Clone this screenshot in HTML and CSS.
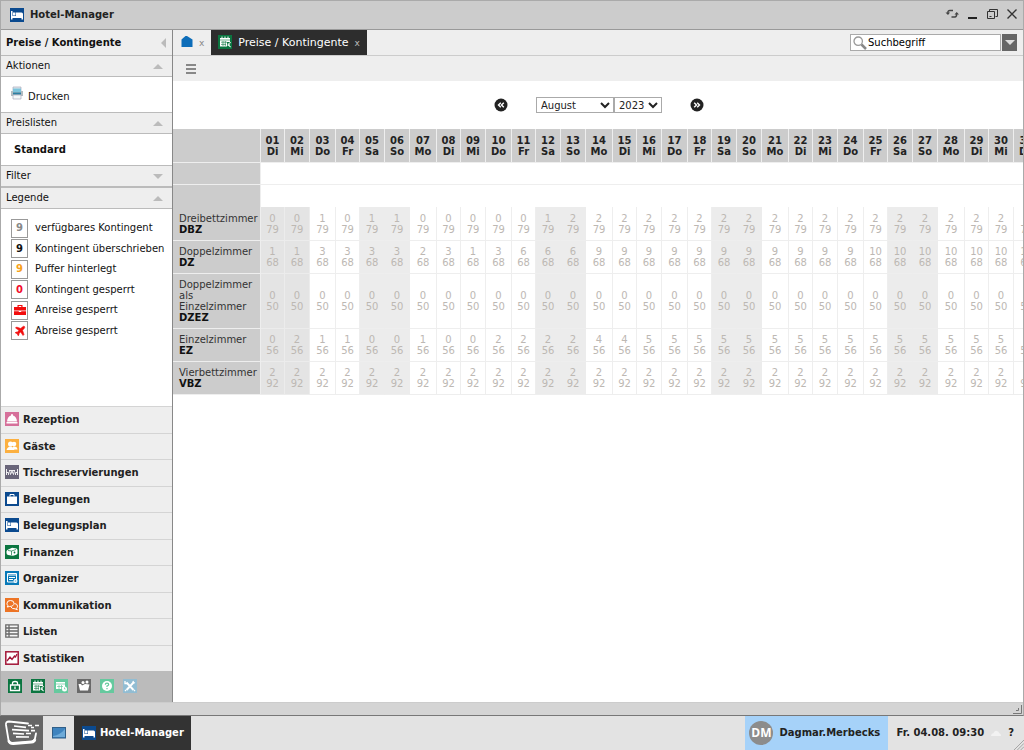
FILE: index.html
```
<!DOCTYPE html>
<html lang="de">
<head>
<meta charset="utf-8">
<title>Hotel-Manager</title>
<link rel="stylesheet" href="styles.css">
</head>
<body>
<svg class="defs" aria-hidden="true">
  <symbol id="i-bed" viewBox="0 0 14 14"><rect width="14" height="14" fill="#0b4a8f"/><path d="M1 3h1.500v5H13v3.500h-1.500V10h-9v1.500H1z M3 4.500h2.500v3H3z M6 4.500h5.500q1.500 0 1.500 1.500v2H6z" fill="#fff"/></symbol>
  <symbol id="i-cal" viewBox="0 0 14 14"><rect width="14" height="14" fill="#0b7540"/><path d="M2 3h10v8.500H2z" fill="#fff"/><path d="M4 1.500v2M7 1.500v2M10 1.500v2" stroke="#fff"/><path d="M2 5h10M3 7.200h6M3 9.400h5M5 6v5M7.300 6v5" stroke="#0b7540" stroke-width=".6"/><path d="M9 7h4v5H9z" fill="#0b7540"/><path d="M13 7.500q-2.500 0-2.500 2.200t2.500 2.200M9.500 9.200H12M9.500 10.400H12" stroke="#fff" fill="none" stroke-width=".8"/></symbol>
</svg>

<div class="window">
  <header class="titlebar">
    <svg class="ico"><use href="#i-bed"/></svg>
    <h1>Hotel-Manager</h1>
    <div class="win-buttons">
      <button aria-label="Neu laden"><svg viewBox="0 0 14 12"><path d="M8 2.500H5Q2.500 2.500 3 5M6.500 9H10Q12 8.500 11.500 6" fill="none" stroke="#444" stroke-width="1.500"/><path d="M.5 4.500h4.500L3 7zM9.500 6.500h4.500l-2.300-2.500z" fill="#444"/></svg></button>
      <button aria-label="Minimieren"><svg viewBox="0 0 14 12"><path d="M3 10h9" stroke="#222" stroke-width="2"/></svg></button>
      <button aria-label="Wiederherstellen"><svg viewBox="0 0 14 12"><path d="M4.500 3.500v-2h8v7h-2M2.500 3.500h7v7h-7zM4.500 8.500h2" fill="none" stroke="#333"/></svg></button>
      <button aria-label="Schließen"><svg viewBox="0 0 14 12"><path d="M2.500 1.500l9 9M11.500 1.500l-9 9" stroke="#333" stroke-width="1.400"/></svg></button>
    </div>
  </header>

  <div class="body">
    <aside class="sidebar">
      <div class="side-title"><h2>Preise / Kontingente</h2><i class="left"></i></div>
      <section>
        <h3>Aktionen<i class="up"></i></h3>
        <div class="actions"><button><svg viewBox="0 0 14 14"><path d="M3 1h8v5H3z" fill="#dfe8ec" stroke="#aab" stroke-width=".7"/><path d="M1 5h12v5H1z" fill="#b3bcc1"/><path d="M3 2.500h8v3.500H3z" fill="#7cc4dc"/><path d="M3 6.500h8v2H3z" fill="#2a7fa3"/><path d="M3 9h8v4H3z" fill="#f4f8f9" stroke="#aab" stroke-width=".7"/></svg>Drucken</button></div>
      </section>
      <section>
        <h3>Preislisten<i class="up"></i></h3>
        <div class="pricelist"><a href="#">Standard</a></div>
      </section>
      <section><h3>Filter<i class="down"></i></h3></section>
      <section class="legend-section">
        <h3>Legende<i class="up"></i></h3>
        <ul class="legend">
          <li><b class="avail">9</b>verfügbares Kontingent</li>
          <li><b>9</b>Kontingent überschrieben</li>
          <li><b class="buffer">9</b>Puffer hinterlegt</li>
          <li><b class="locked">0</b>Kontingent gesperrt</li>
          <li><b><svg viewBox="0 0 12 12"><path d="M3.500 3V1h5v2H12v3.500H0V3zM4.700 2v1h2.600V2zM0 7.200h4.800V8h2.400v-.8H12v3.800H0z" fill="#f20d0d" fill-rule="evenodd"/></svg></b>Anreise gesperrt</li>
          <li><b><svg viewBox="0 0 12 12"><path d="M10.500 1.500Q9.500.8 8.300 2L6.800 3.500 2.500 2l-1 1L5 5.300 3.300 7.200 2 7l-.8.8 2 1 1 2 .8-.8-.2-1.300L6.700 7 9 10.500l1-1L8.500 5.200 10 3.700q1.200-1.200.5-2.200z" fill="#f20d0d" stroke="#f20d0d" stroke-width=".6"/></svg></b>Abreise gesperrt</li>
        </ul>
      </section>
      <nav class="modules">
        <a href="#"><svg viewBox="0 0 14 14"><rect width="14" height="14" fill="#d6709a"/><path d="M2 9.500Q2.500 4.500 6 3.500V2.300h2v1.200Q11.500 4.500 12 9.500zM1.500 10h11v1.500h-11z" fill="#fff"/></svg>Rezeption</a>
        <a href="#"><svg viewBox="0 0 14 14"><rect width="14" height="14" fill="#fcb040"/><circle cx="9" cy="5" r="2.300" fill="#fff"/><path d="M8 7.500h2q2.500.5 2.500 3H8z" fill="#fff"/><circle cx="5.500" cy="5" r="2.500" fill="#fff"/><path d="M1.500 11q.5-2.500 3-3.500h2q2.500 1 3 3.500z" fill="#fff"/></svg>Gäste</a>
        <a href="#"><svg viewBox="0 0 14 14"><rect width="14" height="14" fill="#696579"/><path d="M1.500 4v6M1.500 7.500h2V10M12.500 4v6M12.500 7.500h-2V10M4 5.500h6M4.500 5.500l1 4L7 6l1.500 3.500 1-4" stroke="#fff" fill="none" stroke-width=".9"/></svg>Tischreservierungen</a>
        <a href="#"><svg viewBox="0 0 14 14"><rect width="14" height="14" fill="#0b4a8f"/><path d="M2 4.500h10V12H2z" fill="#fff"/><path d="M5 4.500V2.500h4v2" stroke="#fff" fill="none"/></svg>Belegungen</a>
        <a href="#"><svg><use href="#i-bed"/></svg>Belegungsplan</a>
        <a href="#"><svg viewBox="0 0 14 14"><rect width="14" height="14" fill="#0b7540"/><path d="M1.500 6Q2 4.500 5.500 3.500q1.500-1 3-.5Q12.500 3 12.500 5v3.500Q12 10 8 10.800L3 10Q1.500 9.500 1.500 8z" fill="#fff"/><path d="M3 5.500l3.500.5L11 4.500M6.500 6v4" stroke="#0b7540" stroke-width=".7" fill="none"/><circle cx="9.500" cy="7.500" r=".9" fill="#0b7540"/></svg>Finanzen</a>
        <a href="#"><svg viewBox="0 0 14 14"><rect width="14" height="14" fill="#0879b8"/><path d="M2.500 2.500h9v8.500h-9z" fill="none" stroke="#fff"/><path d="M2.500 4h9M4 6.500h6M4 8.500h4" stroke="#fff"/><circle cx="10.500" cy="10" r="2" fill="#fff"/><path d="M9.700 10h1.600" stroke="#0879b8" stroke-width=".8"/></svg>Organizer</a>
        <a href="#"><svg viewBox="0 0 14 14"><rect width="14" height="14" fill="#ed7425"/><path d="M3 7.800L2 9l2.500-.5Q9 8.300 9 5.300 9 2.500 5.500 2.500T2 5.300Q2 7 3 7.800zM9.500 5.500q3 .3 3 2.700 0 1.300-1 2l.8 1.600-2.300-1Q7 11 6 9" stroke="#fff" fill="none"/></svg>Kommunikation</a>
        <a href="#"><svg viewBox="0 0 14 14"><path d="M.8.8h12.400v12.400H.8zM.8 4h12.400M.8 7h12.400M.8 10h12.400M4 .8v12.400" fill="#f7f7f7" stroke="#696969" stroke-width="1.300"/></svg>Listen</a>
        <a href="#"><svg viewBox="0 0 14 14"><rect x=".8" y=".8" width="12.400" height="12.400" fill="#fff" stroke="#a31638" stroke-width="1.500"/><path d="M2 10l3-4 2 2.500L9.500 5l1 1L12 3" stroke="#a31638" fill="none" stroke-width="1.300"/></svg>Statistiken</a>
      </nav>
      <div class="tools">
        <button aria-label="Sperren"><svg viewBox="0 0 14 14"><rect width="14" height="14" fill="#0b7540"/><path d="M2.500 6h9v5.500h-9zM4.500 6V4q0-1.500 2.500-1.500T9.500 4v2M7 7.500v2.500" stroke="#fff" fill="none" stroke-width="1.300"/></svg></button>
        <button aria-label="Kalender"><svg><use href="#i-cal"/></svg></button>
        <button aria-label="Termine"><svg viewBox="0 0 14 14"><rect width="14" height="14" fill="#65c99e"/><path d="M2 3h9v7H2z" fill="#fff"/><path d="M2 5h9M3 7.500h6M5 6v4M7.500 6v4" stroke="#65c99e" stroke-width=".7"/><circle cx="10.500" cy="10" r="2.500" fill="#fff"/><path d="M10.500 8.500V10h1" stroke="#65c99e" fill="none" stroke-width=".8"/></svg></button>
        <button aria-label="Gruppen"><svg viewBox="0 0 14 14"><rect width="14" height="14" fill="#696969"/><circle cx="6" cy="3.500" r="1.500" fill="#fff"/><circle cx="10" cy="3" r="1.500" fill="#fff"/><path d="M1.500 5H4l1 1.500L8 5l4.500.5L11 11.500H3z" fill="#fff"/></svg></button>
        <button aria-label="Hilfe"><svg viewBox="0 0 14 14"><rect width="14" height="14" fill="#65c99e"/><circle cx="7" cy="7" r="5" fill="#fff"/><path d="M5.300 5.700q0-1.500 1.700-1.500t1.700 1.300Q8.700 6.500 7 7v1M7 9v1.300" stroke="#65c99e" fill="none" stroke-width="1.200"/></svg></button>
        <button aria-label="Einstellungen"><svg viewBox="0 0 14 14"><rect width="14" height="14" fill="#92bdd3"/><path d="M3.500 3.500l7 7.500M10.500 3.500l-7 7.500" stroke="#fff" stroke-width="1.900"/><path d="M2 2v2.500h2.500M12 4l-1.500-.5L10 2M2 11l1 1M11 12l1-1" stroke="#fff" fill="none" stroke-width="1.300"/></svg></button>
      </div>
    </aside>

    <main class="main">
      <div class="tabs">
        <a class="tab" href="#" aria-label="Start"><svg viewBox="0 0 14 14"><path d="M1.500 4.500L5.500 1h1.500l5.500 3.500V12h-11z" fill="#0d6db9"/></svg><span class="x">x</span></a>
        <a class="tab active" href="#"><svg><use href="#i-cal"/></svg>Preise / Kontingente<span class="x">x</span></a>
        <form class="search">
          <label class="field"><svg viewBox="0 0 14 14"><circle cx="5.200" cy="5.200" r="4.200" fill="#fff" stroke="#999" stroke-width="1.300"/><path d="M8.500 8.500l4.500 4.500" stroke="#888" stroke-width="2.500"/></svg><input type="text" value="Suchbegriff" aria-label="Suchbegriff"></label>
          <button type="button" aria-label="Suchoptionen"><i class="down"></i></button>
        </form>
      </div>
      <div class="toolbar"><button aria-label="Menü"><svg viewBox="0 0 12 12"><path d="M1 2h10M1 6h10M1 10h10" stroke="#888" stroke-width="2"/></svg></button></div>
      <div class="picker">
        <button aria-label="Vorheriger Monat"><svg viewBox="0 0 14 14"><circle cx="7" cy="7" r="6.500" fill="#222"/><path d="M6.800 4.800L4.500 7l2.300 2.200M9.800 4.800L7.500 7l2.300 2.200" stroke="#fff" fill="none" stroke-width="1.400"/></svg></button>
        <div class="selects">
          <select class="month" aria-label="Monat"><option>August</option></select>
          <select class="year" aria-label="Jahr"><option>2023</option></select>
        </div>
        <button aria-label="Nächster Monat"><svg viewBox="0 0 14 14"><circle cx="7" cy="7" r="6.500" fill="#222"/><path d="M4.200 4.800L6.500 7 4.200 9.200M7.200 4.800L9.500 7 7.200 9.200" stroke="#fff" fill="none" stroke-width="1.400"/></svg></button>
      </div>
      <table class="quota" id="quota"></table>
    </main>
  </div>

  <footer class="status"><svg viewBox="0 0 9 9"><path d="M8.500 0v8.500H0M5.500 3v2.500H3" stroke="#777" fill="none"/></svg></footer>
</div>

<div class="taskbar">
  <button class="start" aria-label="Start"><svg viewBox="0 0 36 26"><path d="M24 3.500L5 1.500Q1.500 1.500 2 5l2.500 15q.5 3 4 3l19-1.500q3-.3 3.500-3l1-5" fill="none" stroke="#fff" stroke-width="1.800" stroke-linecap="round"/><path d="M4.500 20.500q1 3.500 5 3.300l18-1.500q3-.3 3.500-3" fill="none" stroke="#fff" stroke-width="2.600"/><path d="M10 6l12 1.300M24 5.500h4M27 7.500h3M31 5.500h4M8 9.700l17 1M27 10.700h4M9 13.300l11 .7M22 13.500h5M12 16.800l13 .2" stroke="#fff" stroke-width="1.700"/></svg></button>
  <button class="desktop" aria-label="Desktop"><svg viewBox="0 0 14 12"><rect x=".5" y=".5" width="13" height="10.500" fill="#3f84bf" stroke="#315f88"/><path d="M1 9Q8 8 13 2v8H1z" fill="#6eabd9"/></svg></button>
  <button class="task"><svg><use href="#i-bed"/></svg>Hotel-Manager</button>
  <div class="user"><span class="avatar">DM</span>Dagmar.Merbecks</div>
  <time>Fr. 04.08. 09:30</time>
  <svg class="cloud" viewBox="0 0 12 8"><path d="M1 7q0-2.500 2.500-3Q5 1 7 2q2 .5 2 2 2 .5 2 3z" fill="#f2f2f2"/></svg>
  <a class="help" href="#">?</a>
  <svg class="grip" viewBox="0 0 12 12"><path d="M0 12L12 0M4 12l8-8M8 12l4-4" stroke="#999"/></svg>
</div>
<script src="script.js"></script>
</body>
</html>
```
FILE: styles.css
```
* { box-sizing: border-box; }
body {
  margin: 0;
  height: 100vh;
  display: flex;
  flex-direction: column;
  overflow: hidden;
  font: 10px/12px "DejaVu Sans", Verdana, sans-serif;
  color: #111;
}
h1, h2, h3, ul { margin: 0; padding: 0; font-size: inherit; }
a { color: inherit; text-decoration: none; }
button { border: 0; padding: 0; background: none; font: inherit; color: inherit; display: flex; align-items: center; }
svg { width: 14px; height: 14px; flex: none; display: block; }
.defs { position: absolute; width: 0; height: 0; }

.up, .down, .left { width: 0; height: 0; border: 5px solid transparent; }
.up { border-top: 0; border-bottom-color: #bbb; }
.down { border-bottom: 0; border-top-color: #bbb; }
.left { border-left: 0; border-right-color: #bbb; }

.window { flex: 1; min-height: 0; display: flex; flex-direction: column; border: 1px solid #aaa; border-bottom-color: #777; }
.titlebar { height: 29px; display: flex; align-items: center; padding: 0 4px 0 9px; background: #ccc; border-bottom: 1px solid #999; }
.titlebar h1 { margin-left: 6px; color: #222; }
.win-buttons { margin-left: auto; display: flex; gap: 6px; padding-bottom: 2px; }
.win-buttons svg { height: 12px; }

.body { flex: 1; min-height: 0; display: flex; }
.sidebar { width: 172px; flex: none; display: flex; flex-direction: column; border-right: 1px solid #888; background: #fff; }
.side-title { height: 25px; display: flex; align-items: center; justify-content: space-between; padding: 0 6px 0 5px; background: #eee; }
.sidebar h3 { height: 22px; display: flex; align-items: center; justify-content: space-between; padding: 0 9px 0 5px; background: #eee; border: solid #bbb; border-width: 1px 0; font-weight: normal; }
.actions { height: 35px; padding: 9px 9px 0; }
.actions button { gap: 4px; align-items: flex-start; line-height: 22px; }
.pricelist { height: 31px; padding-left: 13px; line-height: 31px; font-weight: bold; }
.legend-section { flex: 1; }
.legend { list-style: none; padding: 9px 10px; display: grid; grid-auto-rows: 20px 21px; }
.legend li { display: flex; align-items: center; gap: 7px; white-space: nowrap; }
.legend b { width: 17px; height: 19px; flex: none; display: grid; place-items: center; border: 1px solid #999; }
.legend svg { width: 12px; height: 12px; }
.legend .avail { color: #888; }
.legend .buffer { color: #f7a11a; }
.legend .locked { color: #f20d2d; }
.modules { display: grid; grid-auto-rows: 27px 26px; background: #eee; }
.modules a { display: flex; align-items: center; gap: 4px; padding-left: 4px; border-top: 1px solid #d4d4d4; font-weight: bold; color: #222; }
.modules svg { margin-bottom: 2px; }
.tools { height: 31px; flex: none; display: flex; align-items: center; gap: 9px; padding: 0 0 2px 7px; background: #bbb; }

.main { flex: 1; min-width: 0; overflow: hidden; background: #fff; }
.tabs { height: 26px; display: flex; background: #eee; border-bottom: 1px solid #ccc; }
.tab { display: flex; align-items: center; gap: 5px; padding: 0 7px; font-size: 11px; }
.tab svg { margin-bottom: 2px; }
.tab.active { background: #2d2d2d; color: #fff; gap: 6px; }
.tab .x { font-size: 9px; color: #888; }
.tab.active .x { color: #bbb; }
.search { margin-left: auto; display: flex; align-items: center; gap: 1px; padding-right: 6px; }
.field { width: 151px; height: 17px; display: flex; align-items: center; padding-left: 2px; border: 1px solid #aaa; background: #fff; }
.field input { flex: 1; min-width: 0; border: 0; padding: 0 1px; font: inherit; background: none; outline: 0; }
.search button { width: 15px; height: 17px; justify-content: center; background: #666; }
.search .down { border-top-color: #ddd; }
.toolbar { height: 25px; display: flex; align-items: center; padding-left: 12px; background: #eee; }
.toolbar svg { width: 12px; height: 12px; }
.picker { height: 48px; display: flex; align-items: center; justify-content: center; gap: 28px; padding-left: 2px; }
.selects { display: flex; }
.selects select { height: 16px; padding: 0; border: 1px solid #aaa; border-radius: 0; background: #fff; font: inherit; color: #222; }
.month { width: 78px; }
.year { width: 48px; }

.quota { table-layout: fixed; width: 867px; border-spacing: 0; line-height: 11px; color: #bdb8b3; }
.c-name { width: 88px; }
.c-mo { width: 27px; }
.c-di, .c-fr { width: 24px; }
.c-mi, .c-sa, .c-so { width: 25px; }
.c-do { width: 26px; }
.quota td, .quota th { padding: 5px 0; text-align: center; border: solid #eee; border-width: 0 1px 1px 0; }
.quota thead th { background: #ccc; color: #222; padding: 6px 0 5px; }
.quota tbody th { background: #ccc; color: #333; font-weight: normal; text-align: left; padding-left: 6px; }
.quota th b { display: block; color: #111; }
.quota .gap td, .quota .gap th { height: 22px; padding: 0; }
.quota .gap.last th, .quota .gap.last td { border-bottom: 0; }
.quota .gap.last + tr > * { padding-top: 6px; }
.quota .weekend { background: #ececec; border-right-color: #ececec; }
.quota .past { background: #e4e4e4; border-color: #ececec; }

.status { height: 13px; display: flex; align-items: center; justify-content: flex-end; background: #d4d4d4; border-top: 1px solid #ccc; padding-right: 1px; }
.status svg { width: 9px; height: 9px; }
.taskbar { height: 34px; flex: none; display: flex; background: #e3e3e3; font-weight: bold; color: #222; align-items: center; }
.taskbar > * { flex: none; }
.start { width: 43px; height: 100%; justify-content: center; background: #666; }
.start svg { width: 36px; height: 26px; }
.desktop { width: 31px; height: 100%; justify-content: center; }
.desktop svg { height: 12px; }
.task { width: 117px; height: 100%; padding-left: 8px; gap: 4px; background: #333; color: #fff; }
.user { width: 143px; height: 100%; margin-left: auto; display: flex; align-items: center; gap: 6px; padding-left: 4px; background: #a6d2f9; }
.avatar { width: 24px; height: 24px; border-radius: 50%; background: #8c8c8c; color: #fff; display: grid; place-items: center; font-family: "Open Sans", sans-serif; font-size: 12px; }
.taskbar time { margin-left: 8px; }
.cloud { width: 12px; height: 8px; margin: 0 6px; }
.grip { width: 10px; height: 10px; align-self: flex-end; }
```
FILE: script.js
```
const DAYS = ["Di", "Mi", "Do", "Fr", "Sa", "So", "Mo"];
const COUNT = 31;
const TODAY = 3;

// Each list of free rooms is continued with its last value up to the end of the month.
const ROOMS = [
  { name: "Dreibettzimmer", code: "DBZ", price: 79, free: [0, 0, 1, 0, 1, 1, 0, 0, 0, 0, 0, 1, 2] },
  { name: "Doppelzimmer", code: "DZ", price: 68, free: [1, 1, 3, 3, 3, 3, 2, 3, 1, 3, 6, 6, 6, 9, 9, 9, 9, 9, 9, 9, 9, 9, 9, 9, 10] },
  { name: "Doppelzimmer als Einzelzimmer", code: "DZEZ", price: 50, free: [0] },
  { name: "Einzelzimmer", code: "EZ", price: 56, free: [0, 2, 1, 1, 0, 0, 1, 0, 0, 2, 2, 2, 2, 4, 4, 5] },
  { name: "Vierbettzimmer", code: "VBZ", price: 92, free: [2] }
];

const month = Array.from({ length: COUNT }, (_, i) => ({ nr: i + 1, day: DAYS[i % 7] }));

function dayClass(d) {
  if (d.nr < TODAY) return "past";
  return d.day === "Sa" || d.day === "So" ? "weekend" : "";
}

const cols = month.map(d => `<col class="c-${d.day.toLowerCase()}">`).join("");
const head = month.map(d => `<th scope="col">${String(d.nr).padStart(2, "0")}<br>${d.day}</th>`).join("");
const rows = ROOMS.map(r => {
  const cells = month.map((d, i) => {
    const free = r.free[Math.min(i, r.free.length - 1)];
    return `<td class="${dayClass(d)}">${free}<br>${r.price}</td>`;
  }).join("");
  return `<tr><th scope="row">${r.name}<b>${r.code}</b></th>${cells}</tr>`;
}).join("");

document.getElementById("quota").innerHTML =
  `<colgroup><col class="c-name">${cols}</colgroup>` +
  `<thead><tr><th></th>${head}</tr></thead><tbody>` +
  `<tr class="gap"><th></th><td colspan="${COUNT}"></td></tr>` +
  `<tr class="gap last"><th></th><td colspan="${COUNT}"></td></tr>` +
  rows + "</tbody>";
```
